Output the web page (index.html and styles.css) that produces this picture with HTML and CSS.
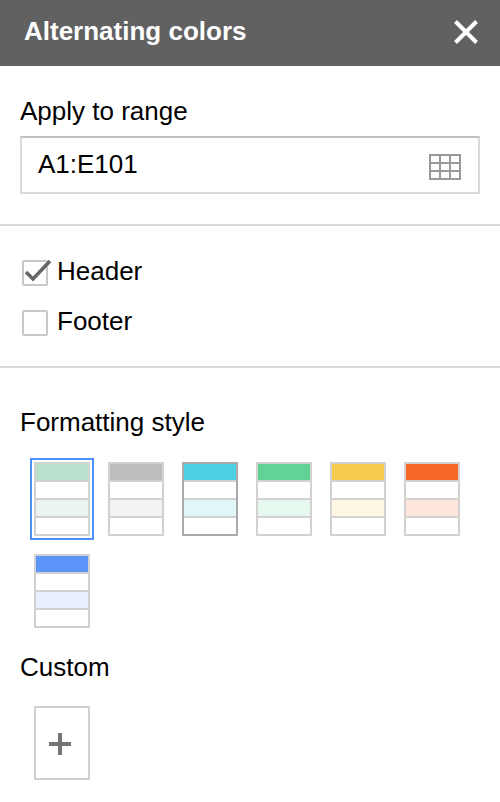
FILE: index.html
```html
<!DOCTYPE html>
<html lang="en">
<head>
  <meta charset="UTF-8">
  <meta name="viewport" content="width=device-width, initial-scale=1.0">
  <title>Alternating colors</title>
  <link rel="stylesheet" href="styles.css">
</head>
<body>
  <div class="titlebar">
    <span class="title">Alternating colors</span>
    <svg class="close-icon" width="24" height="24" viewBox="0 0 24 24">
      <path d="M1.5 1.5L22.5 22.5M22.5 1.5L1.5 22.5" stroke="#fff" stroke-width="4" fill="none"/>
    </svg>
  </div>

  <div class="section range-section">
    <div class="label">Apply to range</div>
    <div class="range-input">
      <span class="range-text">A1:E101</span>
      <svg class="grid-icon" width="32" height="26" viewBox="0 0 32 26">
        <path d="M1 1H31V25H1ZM11 1V25M21 1V25M1 9H31M1 17H31" stroke="#999" stroke-width="2" fill="none"/>
      </svg>
    </div>
  </div>

  <div class="section check-section">
    <div class="check-row">
      <div class="checkbox">
        <svg class="check-mark" width="28" height="24" viewBox="0 0 28 24">
          <path d="M2 13L9 20L26 2" stroke="#666" stroke-width="3.6" fill="none"/>
        </svg>
      </div>
      <span class="check-label">Header</span>
    </div>
    <div class="check-row">
      <div class="checkbox"></div>
      <span class="check-label">Footer</span>
    </div>
  </div>

  <div class="format-section">
    <div class="label">Formatting style</div>
    <div class="swatches">
      <div class="swatch selected">
        <div class="band head-mint"></div><div class="band"></div><div class="band light-mint"></div><div class="band"></div>
      </div>
      <div class="swatch">
        <div class="band head-grey"></div><div class="band"></div><div class="band light-grey"></div><div class="band"></div>
      </div>
      <div class="swatch dark">
        <div class="band head-cyan"></div><div class="band"></div><div class="band light-cyan"></div><div class="band"></div>
      </div>
      <div class="swatch">
        <div class="band head-green"></div><div class="band"></div><div class="band light-green"></div><div class="band"></div>
      </div>
      <div class="swatch">
        <div class="band head-yellow"></div><div class="band"></div><div class="band light-yellow"></div><div class="band"></div>
      </div>
      <div class="swatch">
        <div class="band head-orange"></div><div class="band"></div><div class="band light-orange"></div><div class="band"></div>
      </div>
      <div class="swatch">
        <div class="band head-blue"></div><div class="band"></div><div class="band light-blue"></div><div class="band"></div>
      </div>
    </div>

    <div class="label custom-label">Custom</div>
    <div class="swatches custom-swatches">
      <div class="add-swatch">
        <svg class="plus-icon" width="22" height="22" viewBox="0 0 22 22">
          <path d="M11 0V22M0 11H22" stroke="#757575" stroke-width="4" fill="none"/>
        </svg>
      </div>
    </div>
  </div>
</body>
</html>
```

FILE: styles.css
```css
body {
  margin: 0;
  font-family: "Liberation Sans", Arial, sans-serif;
  font-size: 26px;
  color: #000;
  background-color: #fff;
}

.titlebar {
  height: 66px;
  background-color: #616161;
  display: flex;
  align-items: center;
  justify-content: space-between;
  padding: 0 22px 0 24px;
}

.title {
  color: #fff;
  font-weight: bold;
  margin-bottom: 4px;
}

.close-icon {
  margin-top: -2px;
}

.section {
  border-bottom: 2px solid #d9d9d9;
  padding: 0 20px;
}

.label {
  line-height: 28px;
}

.range-section {
  padding-top: 31px;
  height: 127px;
}

.range-input {
  margin-top: 11px;
  height: 58px;
  box-sizing: border-box;
  border: 2px solid #d9d9d9;
  border-top-color: #c0c0c0;
  display: flex;
  align-items: center;
  justify-content: space-between;
  padding: 0 17px 0 16px;
}

.range-text {
  margin-bottom: 2px;
}

.grid-icon {
  margin-top: 4px;
}

.check-section {
  display: flex;
  flex-direction: column;
  gap: 22px;
  padding-top: 32px;
  height: 108px;
}

.check-row {
  display: flex;
  align-items: center;
  gap: 9px;
  padding-left: 2px;
  height: 28px;
}

.check-label {
  margin-bottom: 2px;
}

.checkbox {
  position: relative;
  width: 26px;
  height: 26px;
  margin-top: 2px;
  box-sizing: border-box;
  border: 2px solid #c8c8c8;
  border-radius: 2px;
}

.check-mark {
  position: absolute;
  left: 0;
  top: -3px;
}

.format-section {
  padding: 40px 20px 0;
}

.swatches {
  display: flex;
  flex-wrap: wrap;
  gap: 18px;
  padding-left: 14px;
  margin-top: 26px;
}

.swatch {
  width: 56px;
  height: 74px;
  box-sizing: border-box;
  border: 2px solid #d2d2d2;
  background-color: #d2d2d2;
  display: flex;
  flex-direction: column;
  gap: 2px;
}

.swatch.selected {
  outline: 2px solid #4d90fe;
  outline-offset: 2px;
}

.swatch.dark {
  border-color: #a9a9a9;
}

.band {
  height: 16px;
  background-color: #fff;
}

.head-mint { background-color: #b7e1cd; }
.light-mint { background-color: #ebf4ef; }
.head-grey { background-color: #bdbdbd; }
.light-grey { background-color: #f3f3f3; }
.head-cyan { background-color: #4dd0e1; }
.light-cyan { background-color: #e0f7fa; }
.head-green { background-color: #63d297; }
.light-green { background-color: #e7f9ef; }
.head-yellow { background-color: #f7cb4d; }
.head-orange { background-color: #f76725; }
.light-orange { background-color: #ffe6dd; }
.head-blue { background-color: #5b95f9; }
.light-blue { background-color: #e8f0fe; }

/* the pale yellow is dithered in the original */
.light-yellow {
  background-color: #fef8e3;
  background-image: radial-gradient(#fbeecb 0.8px, transparent 1px);
  background-size: 7px 5px;
}

.custom-label {
  margin-top: 25px;
}

.custom-swatches {
  margin-top: 25px;
}

.add-swatch {
  width: 56px;
  height: 74px;
  box-sizing: border-box;
  border: 2px solid #d2d2d2;
  display: flex;
  align-items: center;
  justify-content: center;
}

.plus-icon {
  margin: 2px 4px 0 0;
}
```
